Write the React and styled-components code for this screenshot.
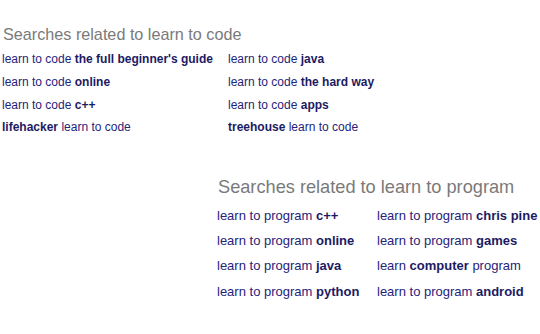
import styled, { createGlobalStyle } from "styled-components"

const Global = createGlobalStyle`
    body {
        margin: 0;
        background: #ffffff;
        font-family: "Liberation Sans", Arial, sans-serif;
    }
`

const codeRows = [
    [["learn to code ", "the full beginner's guide"], ["learn to code ", "java"]],
    [["learn to code ", "online"], ["learn to code ", "the hard way"]],
    [["learn to code ", "c++"], ["learn to code ", "apps"]],
    [["", "lifehacker", " learn to code"], ["", "treehouse", " learn to code"]],
]

const programRows = [
    [["learn to program ", "c++"], ["learn to program ", "chris pine"]],
    [["learn to program ", "online"], ["learn to program ", "games"]],
    [["learn to program ", "java"], ["learn ", "computer", " program"]],
    [["learn to program ", "python"], ["learn to program ", "android"]],
]

function Query({ parts }) {
    const [before, bold, after] = parts
    return (
        <Link>
            {before}<b>{bold}</b>{after}
        </Link>
    )
}

function Related({ title, rows, big }) {
    return (
        <Block $big={big}>
            <Heading $big={big}>{title}</Heading>
            <Grid $big={big}>
                {rows.map((row, i) => (
                    row.map((cell, j) => <Query key={i + "-" + j} parts={cell} />)
                ))}
            </Grid>
        </Block>
    )
}

export default function App() {
    return (
        <>
            <Global />
            <Page>
                <Related title="Searches related to learn to code" rows={codeRows} />
                <Related title="Searches related to learn to program" rows={programRows} big />
            </Page>
        </>
    )
}

const Page = styled.div`
    width: 540px;
    height: 334px;
    display: flex;
    flex-direction: column;
    padding-top: 23px;
    box-sizing: border-box;
`

const Block = styled.div`
    display: flex;
    flex-direction: column;
    margin-left: ${p => p.$big ? "217px" : "2px"};
    margin-top: ${p => p.$big ? "36px" : "0"};
`

const Heading = styled.h3`
    margin: 0;
    font-weight: normal;
    color: #7a7a7a;
    font-size: ${p => p.$big ? "18.2px" : "16.2px"};
    line-height: ${p => p.$big ? "24px" : "22px"};
    padding-left: 1px;
`

const Grid = styled.div`
    display: grid;
    grid-template-columns: ${p => p.$big ? "160px auto" : "226px auto"};
    grid-auto-rows: ${p => p.$big ? "25.3px" : "22.7px"};
    align-items: center;
    margin-top: ${p => p.$big ? "4px" : "3px"};
    font-size: ${p => p.$big ? "13px" : "12px"};

    b {
        font-weight: bold;
        color: #1c1a63;
    }
`

const Link = styled.span`
    color: #25237a;
    white-space: nowrap;
`
